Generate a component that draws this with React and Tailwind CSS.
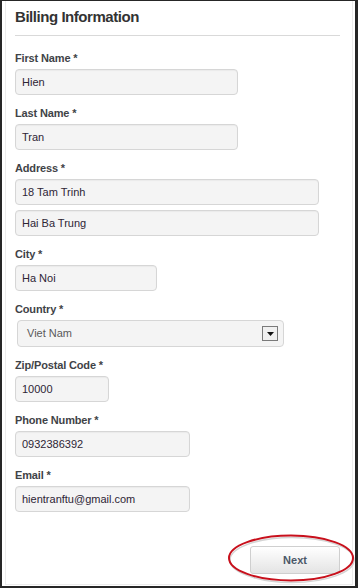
import React from 'react';

const font = { fontFamily: '"Liberation Sans", Arial, sans-serif' };

function Label({ children }) {
  return (
    <div className="h-[16px] leading-[16px] text-[11px] font-bold text-[#3f4347] tracking-[-0.15px] mb-[3px]">
      {children}
    </div>
  );
}

function TextInput({ value, width, className = '' }) {
  return (
    <div
      className={`h-[26px] flex items-center pl-[6px] bg-[#f4f4f4] border border-[#d6d6d6] rounded-[4px] shadow-[inset_0_1px_1px_rgba(0,0,0,0.04)] text-[11px] text-[#2e2535] ${className}`}
      style={{ width }}
    >
      {value}
    </div>
  );
}

function Field({ label, children }) {
  return (
    <div className="mb-[10px]">
      <Label>{label}</Label>
      {children}
    </div>
  );
}

export default function App() {
  return (
    <div style={font} className="w-[358px] h-[588px] bg-white border-t border-l-2 border-r-[3px] border-b-2 border-[#262626] overflow-hidden">
      <div className="h-[584px] ml-[3px] mr-[2px] border border-t-0 border-[#ececec] pl-[9px] pr-[12px] relative">
        {/* Header */}
        <h1 className="pt-[6px] h-[26px] leading-[20px] text-[15px] font-bold text-[#333] tracking-[-0.45px]">
          Billing Information
        </h1>
        <div className="mt-[8px] h-px bg-[#d9d9d9] border-b border-b-white box-content" />

        {/* Form */}
        <div className="mt-[13px]">
          <Field label="First Name *">
            <TextInput value="Hien" width={223} />
          </Field>
          <Field label="Last Name *">
            <TextInput value="Tran" width={223} />
          </Field>
          <div className="mb-[10px]">
            <Label>Address *</Label>
            <TextInput value="18 Tam Trinh" width={304} className="mb-[5px]" />
            <TextInput value="Hai Ba Trung" width={304} />
          </div>
          <Field label="City *">
            <TextInput value="Ha Noi" width={142} />
          </Field>
          <div className="mb-[10px]">
            <Label>Country *</Label>
            <div className="ml-[2px] w-[267px] h-[27px] flex items-center justify-between pl-[9px] pr-[5px] bg-[#f4f4f4] border border-[#d6d6d6] rounded-[4px] text-[11px] text-[#5a5a5a]">
              <span>Viet Nam</span>
              <div className="w-[16px] h-[15px] border border-[#7a7a7a] bg-[#f0f0f0] flex items-center justify-center">
                <svg width="7" height="4" viewBox="0 0 7 4">
                  <path d="M0 0h7L3.5 4z" fill="#111" />
                </svg>
              </div>
            </div>
          </div>
          <Field label="Zip/Postal Code *">
            <TextInput value="10000" width={94} />
          </Field>
          <Field label="Phone Number *">
            <TextInput value="0932386392" width={175} />
          </Field>
          <Field label="Email *">
            <TextInput value="hientranftu@gmail.com" width={175} />
          </Field>
        </div>

        {/* Actions */}
        <div className="flex justify-end mt-[34px]">
          <div className="relative">
            <button className="w-[90px] h-[28px] rounded-[3px] border border-[#cfcfcf] bg-gradient-to-b from-white to-[#e4e4e4] text-[11px] font-bold text-[#4b5868]">
              Next
            </button>
            <svg className="absolute left-[-22px] top-[-12px] pointer-events-none" width="128" height="50" viewBox="0 0 128 50">
              <ellipse cx="64" cy="26" rx="62" ry="22.5" fill="none" stroke="#d4d4d4" strokeWidth="1.5" />
              <ellipse cx="63" cy="24" rx="62" ry="22.5" fill="none" stroke="#c8101c" strokeWidth="2" />
            </svg>
          </div>
        </div>
      </div>
    </div>
  );
}
